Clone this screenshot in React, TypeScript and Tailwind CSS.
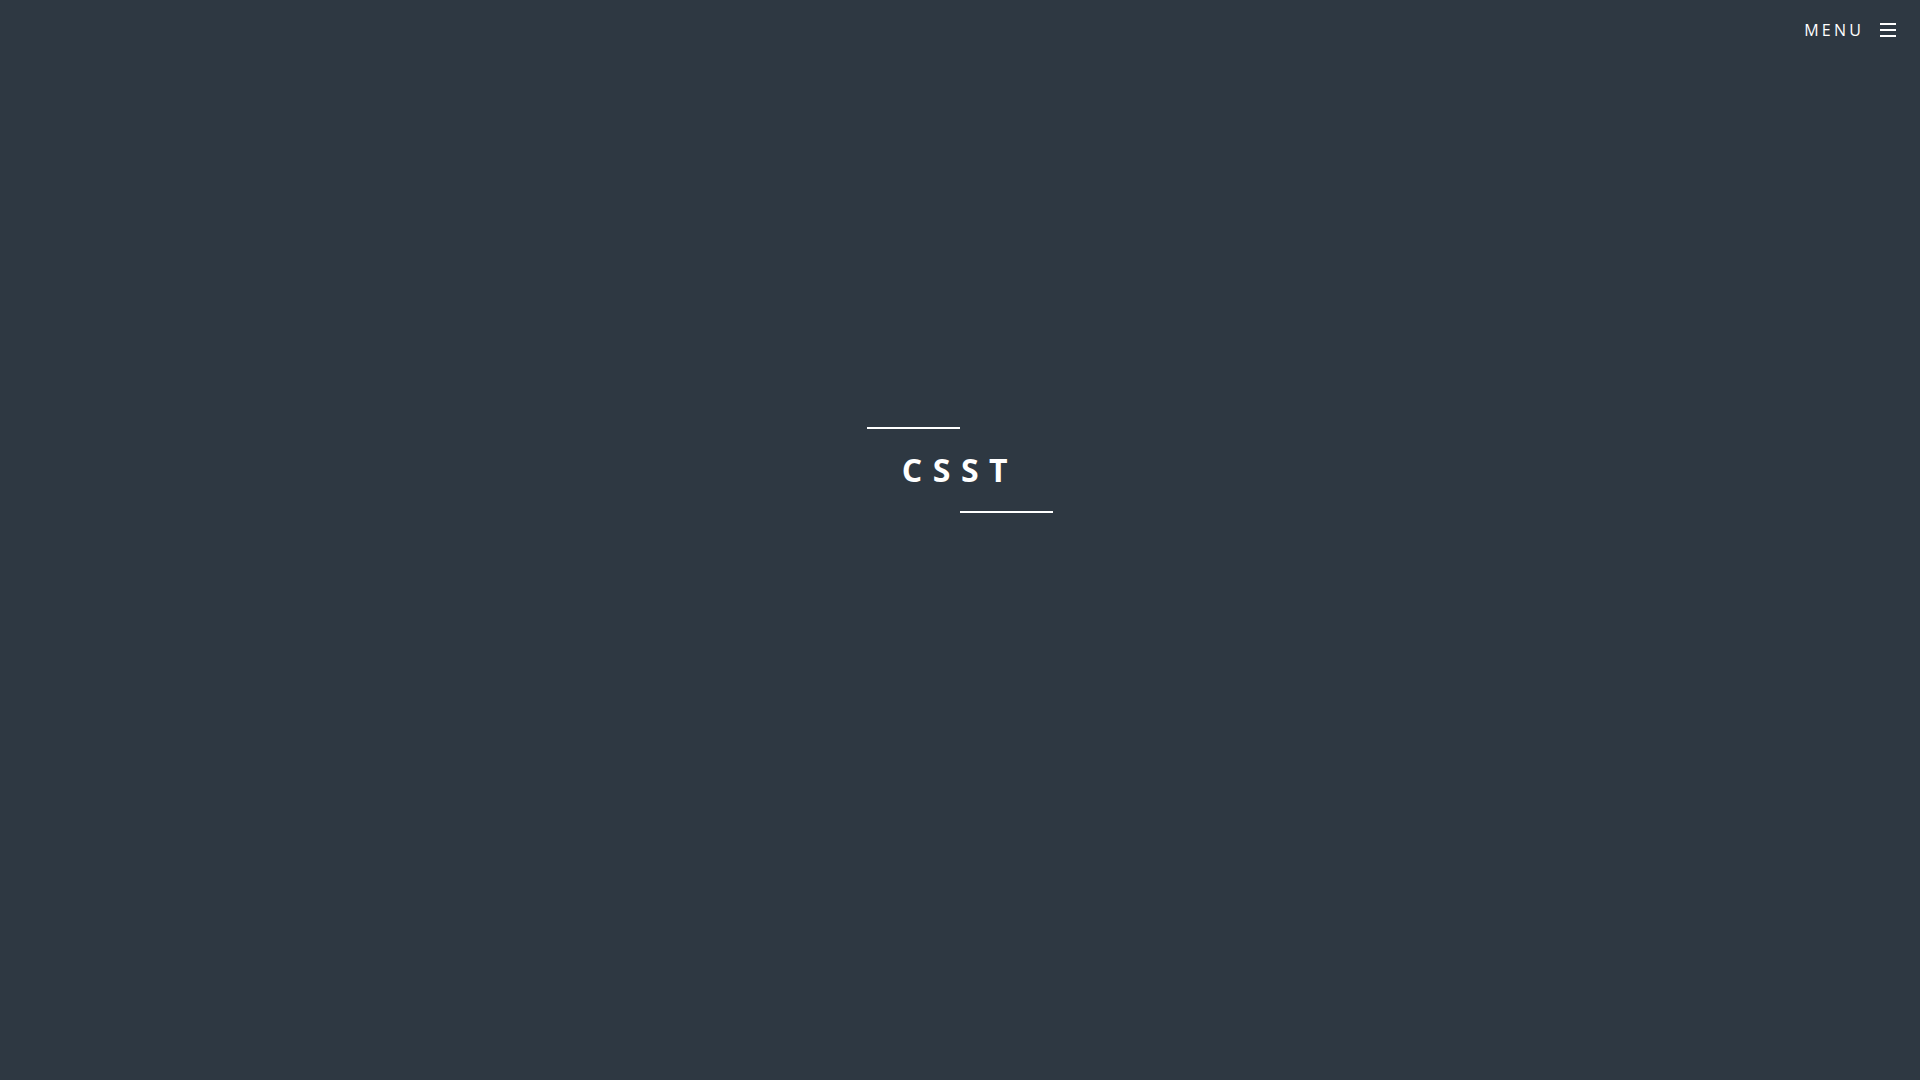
export default function App() {
  return (
    <div
      className="relative w-full h-screen bg-[#2e3842] overflow-hidden"
      style={{ fontFamily: '"Open Sans", sans-serif' }}
    >
      <div className="absolute top-[16px] right-[24px] flex items-center text-white cursor-pointer">
        <span className="text-[16px] tracking-[0.2em] leading-[28px]">MENU</span>
        <svg className="ml-[16px]" width="16" height="16" viewBox="0 0 16 16">
          <rect x="0" y="1" width="16" height="2" fill="#fff" />
          <rect x="0" y="7" width="16" height="2" fill="#fff" />
          <rect x="0" y="13" width="16" height="2" fill="#fff" />
        </svg>
      </div>
      <div className="flex justify-center pt-[427px]">
        <div className="w-[186px] flex flex-col">
          <div className="w-[93px] h-[2px] bg-white self-start" />
          <h1 className="text-white text-[32px] font-bold tracking-[0.33em] leading-[40px] text-center mt-[21px] mb-[21px]">
            CSST
          </h1>
          <div className="w-[93px] h-[2px] bg-white self-end" />
        </div>
      </div>
    </div>
  );
}
